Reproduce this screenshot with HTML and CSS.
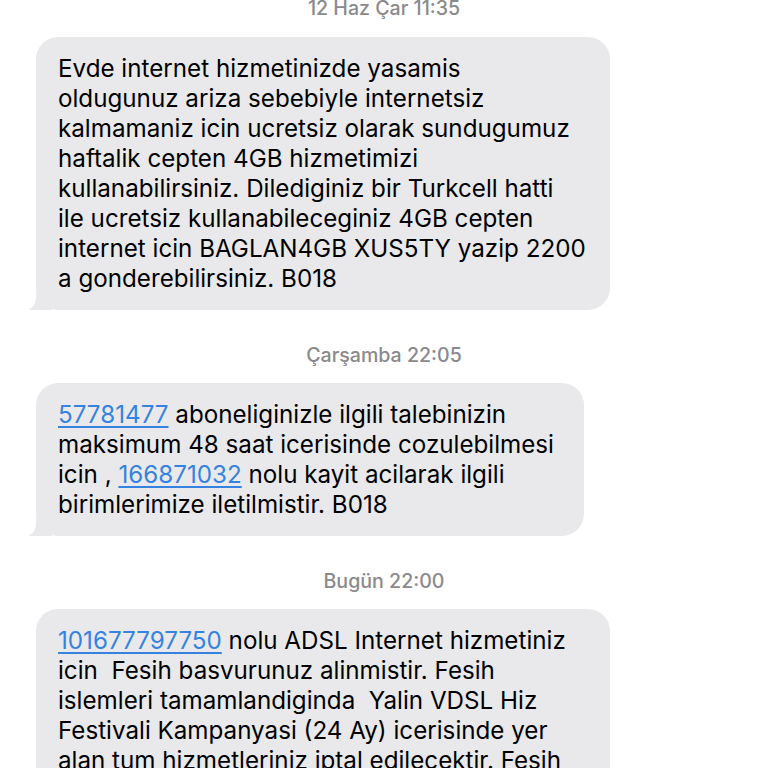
FILE: index.html
```html
<!DOCTYPE html>
<html>
<head>
<meta charset="utf-8">
<link rel="stylesheet" href="styles.css">
</head>
<body>
<div class="thread">
  <div class="stamp stamp-first">12 Haz Çar 11:35</div>
  <div class="bubble b1">Evde internet hizmetinizde yasamis<br>oldugunuz ariza sebebiyle internetsiz<br>kalmamaniz icin ucretsiz olarak sundugumuz<br>haftalik cepten 4GB hizmetimizi<br>kullanabilirsiniz. Dilediginiz bir Turkcell hatti<br>ile ucretsiz kullanabileceginiz 4GB cepten<br>internet icin BAGLAN4GB XUS5TY yazip 2200<br>a gonderebilirsiniz. B018<span class="tail"></span></div>
  <div class="stamp">Çarşamba 22:05</div>
  <div class="bubble b2"><span class="link">57781477</span> aboneliginizle ilgili talebinizin<br>maksimum 48 saat icerisinde cozulebilmesi<br>icin , <span class="link">166871032</span> nolu kayit acilarak ilgili<br>birimlerimize iletilmistir. B018<span class="tail"></span></div>
  <div class="stamp">Bugün 22:00</div>
  <div class="bubble b3"><span class="link">101677797750</span> nolu ADSL Internet hizmetiniz<br>icin  Fesih basvurunuz alinmistir. Fesih<br>islemleri tamamlandiginda  Yalin VDSL Hiz<br>Festivali Kampanyasi (24 Ay) icerisinde yer<br>alan tum hizmetleriniz iptal edilecektir. Fesih</div>
</div>
</body>
</html>
```
FILE: styles.css
```css
html, body {
  margin: 0;
  padding: 0;
  background: #ffffff;
  overflow: hidden;
}
body {
  width: 768px;
  height: 768px;
  font-family: "Inter", "Liberation Sans", sans-serif;
}
.thread {
  display: flex;
  flex-direction: column;
  align-items: flex-start;
  padding-left: 36px;
  margin-top: -4px;
}
.stamp {
  align-self: center;
  margin-left: -36px;
  color: #8a8a8e;
  font-size: 19.6px;
  font-weight: 500;
  line-height: 24px;
  margin-top: 33px;
  margin-bottom: 16px;
}
.stamp-first {
  margin-top: 0;
  margin-bottom: 17px;
}
.bubble {
  position: relative;
  background: #e9e9eb;
  color: #000000;
  border-radius: 22px;
  font-size: 24.2px;
  line-height: 30px;
  padding: 17px 22px 16px 22px;
  white-space: pre;
  box-sizing: border-box;
}
.b1 { width: 574px; }
.b2 { width: 548px; }
.b3 { width: 574px; }
.link {
  color: #3483e0;
  text-decoration: underline;
  text-underline-offset: 3px;
  text-decoration-thickness: 1.5px;
}
.tail {
  position: absolute;
  left: -8px;
  bottom: 0;
  width: 24px;
  height: 18px;
  background: #e9e9eb;
  clip-path: path("M8 0 L24 0 L24 18 L0 18 C5 16 8 12 8 4 Z");
}
```
